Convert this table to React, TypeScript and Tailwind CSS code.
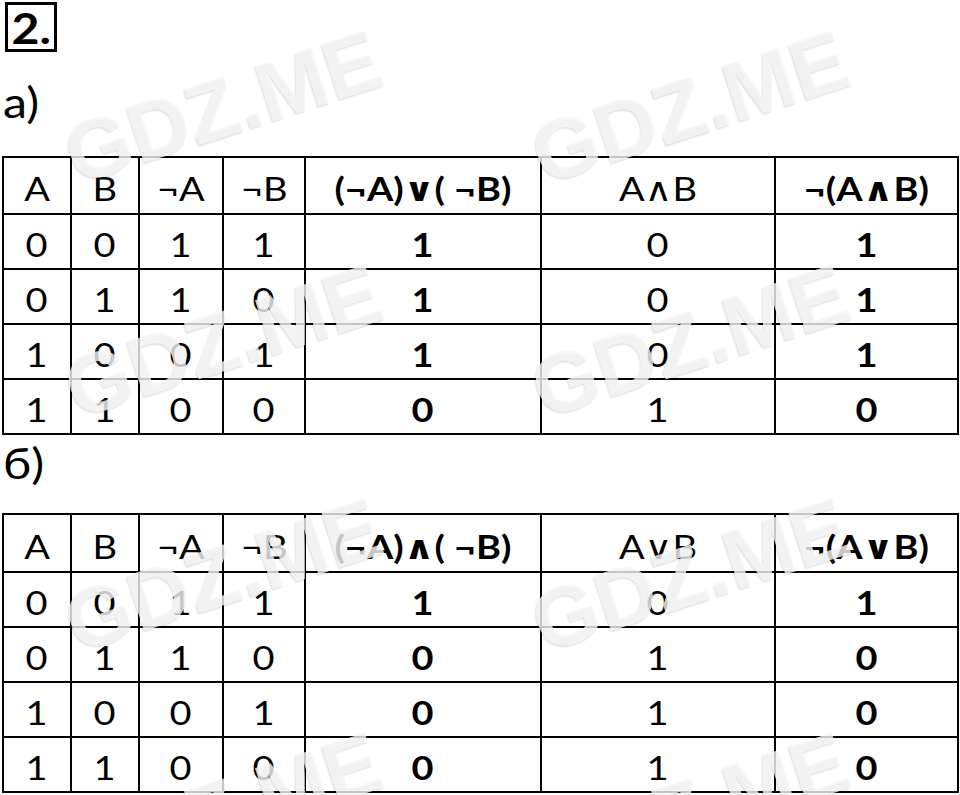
import React from "react";

type Cell = { t: string; b?: boolean };

const headA: Cell[] = [
  { t: "A" },
  { t: "B" },
  { t: "¬A" },
  { t: "¬B" },
  { t: "(¬A)∨( ¬B)", b: true },
  { t: "A∧B" },
  { t: "¬(A∧B)", b: true },
];
const headB: Cell[] = [
  { t: "A" },
  { t: "B" },
  { t: "¬A" },
  { t: "¬B" },
  { t: "(¬A)∧( ¬B)", b: true },
  { t: "A∨B" },
  { t: "¬(A∨B)", b: true },
];
const rowsA = [
  [0, 0, 1, 1, 1, 0, 1],
  [0, 1, 1, 0, 1, 0, 1],
  [1, 0, 0, 1, 1, 0, 1],
  [1, 1, 0, 0, 0, 1, 0],
];
const rowsB = [
  [0, 0, 1, 1, 1, 0, 1],
  [0, 1, 1, 0, 0, 1, 0],
  [1, 0, 0, 1, 0, 1, 0],
  [1, 1, 0, 0, 0, 1, 0],
];

function CellBox({ text, bold }: { text: string; bold?: boolean }) {
  return (
    <div className="bg-white flex items-center justify-center pt-[6px]">
      <span
        className={
          "inline-block whitespace-pre scale-x-[1.15] text-[33px] leading-none text-black " +
          (bold ? "font-bold" : "font-normal")
        }
      >
        {text}
      </span>
    </div>
  );
}

function Table({ head, rows, headH }: { head: Cell[]; rows: number[][]; headH: "a" | "b" }) {
  return (
    <div
      className={
        "ml-[2px] w-[957px] grid grid-cols-[66px_66px_82px_80px_234px_232px_181px] gap-[2px] bg-black p-[2px] " +
        (headH === "a"
          ? "grid-rows-[55px_53px_53px_53px_53px]"
          : "grid-rows-[56px_53px_53px_53px_53px]")
      }
    >
      {head.map((c, i) => (
        <CellBox key={"h" + i} text={c.t} bold={c.b} />
      ))}
      {rows.map((r, ri) =>
        r.map((v, ci) => (
          <CellBox key={ri + "-" + ci} text={String(v)} bold={ci === 4 || ci === 6} />
        ))
      )}
    </div>
  );
}

const marks = [
  [223, 107],
  [690, 107],
  [223, 341],
  [690, 341],
  [223, 575],
  [690, 575],
  [223, 809],
  [690, 809],
];

export default function App() {
  return (
    <div className="relative w-[960px] h-[795px] overflow-hidden bg-white text-black font-['Lato','DejaVu_Sans',sans-serif]">
      <div className="ml-[5px] mt-[2px] w-[52px] h-[50px] border-[3px] border-black flex items-center justify-center">
        <span className="inline-block scale-x-[1.15] text-[42px] font-bold leading-none pt-[2px]">2.</span>
      </div>
      <div className="h-[104px] pl-[3px] pt-[25px]">
        <span className="inline-block origin-left scale-x-[1.15] text-[42px] leading-[50px]">a)</span>
      </div>
      <Table head={headA} rows={rowsA} headH="a" />
      <div className="h-[78px] pl-[3px] pt-[3px]">
        <span className="inline-block origin-left scale-x-[1.15] text-[42px] leading-[50px]">б)</span>
      </div>
      <Table head={headB} rows={rowsB} headH="b" />

      {marks.map(([x, y], i) => (
        <div
          key={i}
          className="absolute pointer-events-none whitespace-nowrap font-['Liberation_Sans',sans-serif] font-bold text-[84px] leading-none text-[rgba(247,247,247,0.8)] [text-shadow:-1px_1px_2px_rgba(0,0,0,0.14)]"
          style={{ left: x, top: y, transform: "translate(-50%, -50%) rotate(-18deg)" }}
        >
          GDZ.ME
        </div>
      ))}
    </div>
  );
}
